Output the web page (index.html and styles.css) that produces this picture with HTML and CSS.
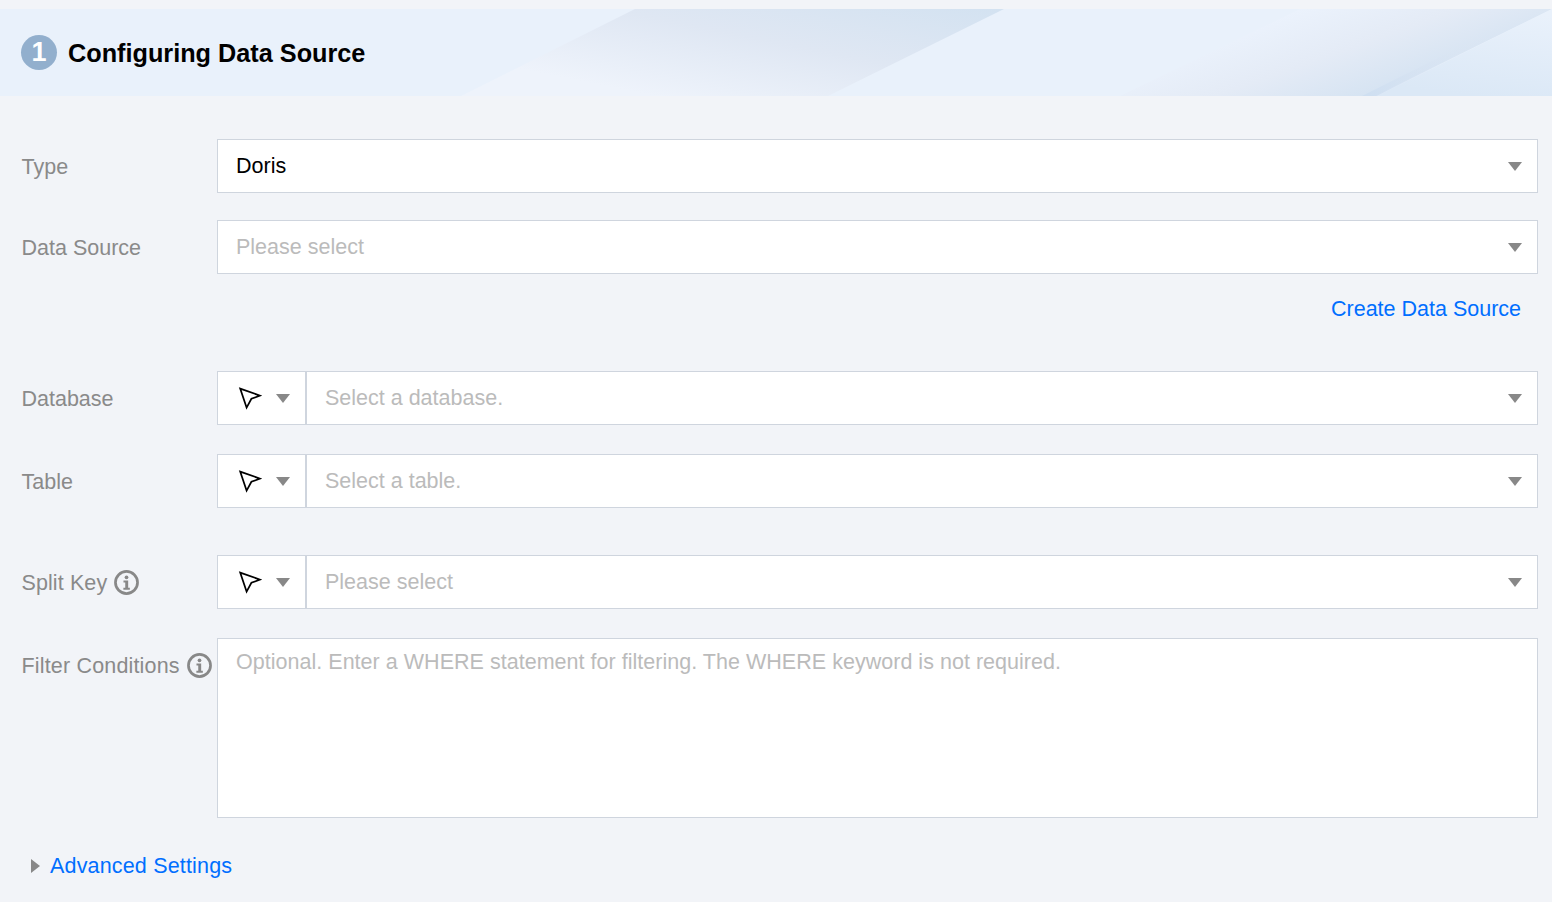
FILE: index.html
```html
<!DOCTYPE html>
<html lang="en">
<head>
<meta charset="utf-8">
<title>Configuring Data Source</title>
<link rel="stylesheet" href="styles.css">
</head>
<body>
<svg class="defs" width="0" height="0" aria-hidden="true">
  <symbol id="cursor" viewBox="0 0 24 24"><path d="M2.2 2.6 L22 9.6 L13.4 12.8 L8.6 21.6 Z" fill="none" stroke="#000" stroke-width="1.7" stroke-linejoin="miter"/></symbol>
  <symbol id="info" viewBox="0 0 24 24"><circle cx="12" cy="12" r="10.6" fill="none" stroke="#888" stroke-width="2.6"/><circle cx="12" cy="7" r="1.8" fill="#888"/><path d="M9.1 10.1h4.5v7h1.6v1.9H9v-1.9h1.8v-5.1H9.1z" fill="#888"/></symbol>
</svg>
<header class="banner">
  <svg class="banner-art" viewBox="0 0 1552 87" preserveAspectRatio="none" aria-hidden="true">
    <defs>
      <linearGradient id="g1" gradientUnits="userSpaceOnUse" x1="950" y1="-10" x2="920" y2="140">
        <stop offset="0" stop-color="#d3e2f1"/><stop offset=".5" stop-color="#dfe7f3"/><stop offset="1" stop-color="#eef3fb"/>
      </linearGradient>
      <linearGradient id="g2" gradientUnits="userSpaceOnUse" x1="1375" y1="87" x2="1339" y2="-14">
        <stop offset="0" stop-color="#d5e3f2"/><stop offset=".5" stop-color="#e4ebf6"/><stop offset="1" stop-color="#ebf2fc"/>
      </linearGradient>
      <linearGradient id="g3" gradientUnits="userSpaceOnUse" x1="1480" y1="87" x2="1490" y2="0">
        <stop offset="0" stop-color="#dbe8f6"/><stop offset="1" stop-color="#e9f1fb"/>
      </linearGradient>
      <linearGradient id="g4" gradientUnits="userSpaceOnUse" x1="1370" y1="87" x2="1490" y2="20">
        <stop offset="0" stop-color="#cfdff1"/><stop offset="1" stop-color="#dfe7f3" stop-opacity="0"/>
      </linearGradient>
    </defs>
    <polygon points="635,0 1004,0 828,87 461,87" fill="url(#g1)"/>
    <polygon points="1300,0 1552,0 1375,87 1120,87" fill="url(#g2)"/>
    <polygon points="1552,0 1552,87 1377,87" fill="url(#g3)"/>
    <polygon points="1490,23 1505,23 1377,87 1362,87" fill="url(#g4)"/>
  </svg>
  <span class="step">1</span>
  <h1 class="banner-title">Configuring Data Source</h1>
</header>
<main class="form">
  <div class="row row-type">
    <label class="label">Type</label>
    <div class="select"><span class="value">Doris</span><i class="caret"></i></div>
  </div>
  <div class="row row-source">
    <label class="label">Data Source</label>
    <div class="select"><span class="placeholder">Please select</span><i class="caret"></i></div>
  </div>
  <div class="link-row"><a class="link">Create Data Source</a></div>
  <div class="row row-db">
    <label class="label">Database</label>
    <div class="combo">
      <div class="mode"><svg class="cursor-icon"><use href="#cursor"/></svg><i class="caret"></i></div>
      <div class="select select-inner"><span class="placeholder">Select a database.</span><i class="caret"></i></div>
    </div>
  </div>
  <div class="row row-table">
    <label class="label">Table</label>
    <div class="combo">
      <div class="mode"><svg class="cursor-icon"><use href="#cursor"/></svg><i class="caret"></i></div>
      <div class="select select-inner"><span class="placeholder">Select a table.</span><i class="caret"></i></div>
    </div>
  </div>
  <div class="row row-split">
    <label class="label label-split">Split Key<svg class="info-icon"><use href="#info"/></svg></label>
    <div class="combo">
      <div class="mode"><svg class="cursor-icon"><use href="#cursor"/></svg><i class="caret"></i></div>
      <div class="select select-inner"><span class="placeholder">Please select</span><i class="caret"></i></div>
    </div>
  </div>
  <div class="row row-filter">
    <label class="label label-filter">Filter Conditions<svg class="info-icon"><use href="#info"/></svg></label>
    <div class="textarea"><span class="placeholder placeholder-long">Optional. Enter a WHERE statement for filtering. The WHERE keyword is not required.</span></div>
  </div>
  <div class="advanced"><i class="caret-right"></i><a class="link link-advanced">Advanced Settings</a></div>
</main>
</body>
</html>
```
FILE: styles.css
```css
* { box-sizing: border-box; }
html, body { margin: 0; height: 100%; }
body {
  background: #f2f4f8;
  font-family: "Liberation Sans", Arial, sans-serif;
  font-size: 21.5px;
  color: #000;
  overflow: hidden;
  padding-top: 9px;
}
.defs { position: absolute; }
.banner {
  position: relative;
  height: 87px;
  background: #e9f1fb;
  display: flex;
  align-items: center;
  padding-left: 21px;
  gap: 11px;
}
.banner-art { position: absolute; inset: 0; width: 100%; height: 100%; }
.step {
  position: relative;
  width: 36px;
  height: 35px;
  border-radius: 50%;
  background: #92afcd;
  color: #fff;
  font-size: 27px;
  font-weight: 700;
  line-height: 35px;
  text-align: center;
}
.banner-title {
  position: relative;
  top: 1px;
  margin: 0;
  font-size: 25.25px;
  font-weight: 700;
  color: #000;
}
.form { padding: 43px 14px 0 21px; }
.row { display: flex; align-items: flex-start; }
.row-source { margin-top: 27px; }
.row-db { margin-top: 48px; }
.row-table { margin-top: 29px; }
.row-split { margin-top: 47px; }
.row-filter { margin-top: 29px; }
.label {
  width: 196px;
  flex: none;
  height: 54px;
  display: flex;
  align-items: center;
  padding: 2px 0 0 0.5px;
  color: #8a8a8a;
  white-space: nowrap;
}
.label-split { letter-spacing: 0.1px; }
.label-filter { letter-spacing: 0.17px; }
.info-icon { width: 25px; height: 25px; margin: -1px 0 0 7px; flex: none; }
.select, .textarea, .combo {
  flex: 1;
  background: #fff;
  border: 1px solid #cfd5de;
}
.select {
  height: 54px;
  display: flex;
  align-items: center;
  justify-content: space-between;
  padding: 0 15px 0 18px;
}
.combo { display: flex; height: 54px; }
.mode {
  width: 89px;
  flex: none;
  display: flex;
  align-items: center;
  padding-left: 20px;
  gap: 14px;
  border-right: 2px solid #cfd5de;
}
.select-inner { border: 0; height: 52px; padding-left: 18px; }
.cursor-icon { width: 24px; height: 24px; flex: none; }
.caret {
  width: 0;
  height: 0;
  flex: none;
  border-left: 7px solid transparent;
  border-right: 7px solid transparent;
  border-top: 9px solid #888;
}
.value { color: #000; }
.placeholder { color: #bbb; }
.placeholder-long { letter-spacing: 0.025px; }
.textarea { height: 180px; padding: 10px 18px; line-height: 26px; }
.link { color: #006eff; text-decoration: none; }
.link-advanced { letter-spacing: 0.17px; }
.link-row {
  display: flex;
  justify-content: flex-end;
  padding-right: 17px;
  margin-top: 21px;
  line-height: 28px;
  height: 28px;
}
.advanced {
  display: flex;
  align-items: center;
  gap: 10px;
  margin-top: 34px;
  padding-left: 10px;
  line-height: 28px;
}
.caret-right {
  width: 0;
  height: 0;
  border-top: 7px solid transparent;
  border-bottom: 7px solid transparent;
  border-left: 9px solid #888;
}
```
